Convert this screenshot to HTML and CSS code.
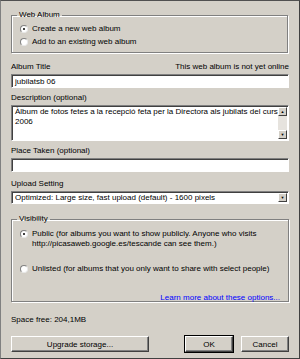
FILE: index.html
```html
<!DOCTYPE html>
<html>
<head>
  <title>Web Album</title>
  <link rel="stylesheet" href="styles.css">
</head>
<body>

  <div class="dialog">
    <fieldset class="group album-group">
      <legend>Web Album</legend>
      <label class="radio"><span class="dot checked"></span>Create a new web album</label>
      <label class="radio"><span class="dot"></span>Add to an existing web album</label>
    </fieldset>

    <div class="row-label title-label">
      <span>Album Title</span>
      <span>This web album is not yet online</span>
    </div>
    <div class="field">jubilatsb 06</div>

    <div class="row-label">Description (optional)</div>
    <div class="field area">
      <div class="area-text">Àlbum de fotos fetes a la recepció feta per la Directora als jubilats del curs 2006</div>
      <div class="scrollbar">
        <span class="arrow">&#9650;</span>
        <span class="track"></span>
        <span class="arrow">&#9660;</span>
      </div>
    </div>

    <div class="row-label">Place Taken (optional)</div>
    <div class="field"></div>

    <div class="row-label upload-label">Upload Setting</div>
    <div class="field select">
      <span>Optimized: Large size, fast upload (default) - 1600 pixels</span>
      <span class="drop">&#9660;</span>
    </div>

    <fieldset class="group vis-group">
      <legend>Visibility</legend>
      <label class="radio top"><span class="dot checked"></span><span>Public (for albums you want to show publicly. Anyone who visits<br>http://picasaweb.google.es/tescande can see them.)</span></label>
      <label class="radio unlisted"><span class="dot"></span>Unlisted (for albums that you only want to share with select people)</label>
      <a class="learn" href="#">Learn more about these options...</a>
    </fieldset>

    <div class="space">Space free: 204,1MB</div>

    <div class="buttons">
      <button class="btn wide">Upgrade storage...</button>
      <span class="spacer"></span>
      <button class="btn default">OK</button>
      <button class="btn">Cancel</button>
    </div>
  </div>

</body>
</html>
```

FILE: styles.css
```css
body {
  margin: 0;
  padding: 0;
  background-color: #d4d0c8;
  font-family: "Liberation Sans", Arial, sans-serif;
  font-size: 8px;
  color: #000;
}

.dialog {
  width: 300px;
  height: 359px;
  box-sizing: border-box;
  padding: 9px 10px 0 10px;
  border-top: 1px solid #505050;
  border-left: 1px solid #808080;
  border-right: 1px solid #404040;
  border-bottom: 1px solid #404040;
  display: flex;
  flex-direction: column;
}

.group {
  margin: 0;
  padding: 0 0 0 8px;
  border: 1px solid #808080;
  box-shadow: inset 1px 1px 0 #fff, 1px 1px 0 #fff;
  min-width: 0;
  box-sizing: border-box;
  flex: none;
}

.group legend {
  padding: 0 2px;
  margin-left: -3px;
  line-height: 10px;
}

.album-group {
  height: 43px;
  width: 277px;
  padding-top: 2px;
}

.radio {
  display: flex;
  align-items: center;
  gap: 4px;
  height: 13px;
}

.radio.top {
  align-items: flex-start;
  line-height: 10px;
  height: auto;
  margin-top: 5px;
}

.radio.top .dot {
  margin-top: 1px;
}

.radio.unlisted {
  margin-top: 13px;
}

.dot {
  width: 8px;
  height: 8px;
  border-radius: 50%;
  background: #fff;
  box-sizing: border-box;
  border: 1px solid #808080;
  border-right-color: #e8e8e8;
  border-bottom-color: #e8e8e8;
  position: relative;
  flex: none;
}

.dot.checked::after {
  content: "";
  position: absolute;
  left: 2px;
  top: 2px;
  width: 2px;
  height: 2px;
  background: #000;
  border-radius: 50%;
}

.row-label {
  line-height: 10px;
  margin-top: 5px;
  margin-bottom: 2px;
}

.title-label {
  display: flex;
  justify-content: space-between;
  margin-top: 9px;
}

.upload-label {
  margin-top: 7px;
}

.field {
  height: 14px;
  flex: none;
  box-sizing: border-box;
  background: #fff;
  border: 1px solid;
  border-color: #808080 #fff #fff #808080;
  box-shadow: inset 1px 1px 0 #404040;
  padding: 1px 3px;
  line-height: 11px;
}

.area {
  height: 36px;
  display: flex;
  padding: 1px 1px 1px 3px;
}

.area-text {
  flex: 1;
  line-height: 10px;
}

.scrollbar {
  width: 9px;
  display: flex;
  flex-direction: column;
  background: #e6e3de;
}

.arrow {
  height: 9px;
  background: #d4d0c8;
  box-sizing: border-box;
  border: 1px solid;
  border-color: #fff #404040 #404040 #fff;
  font-size: 4px;
  line-height: 7px;
  text-align: center;
  color: #000;
}

.track {
  flex: 1;
}

.select {
  height: 13px;
  display: flex;
  justify-content: space-between;
  padding: 0 1px 0 3px;
  line-height: 10px;
  align-items: center;
}

.drop {
  width: 9px;
  height: 9px;
  background: #d4d0c8;
  box-sizing: border-box;
  border: 1px solid;
  border-color: #fff #404040 #404040 #fff;
  font-size: 4px;
  line-height: 7px;
  text-align: center;
}

.vis-group {
  height: 88px;
  margin-top: 10px;
  padding-right: 8px;
  display: flex;
  flex-direction: column;
}

.learn {
  color: #0000ff;
  text-decoration: none;
  text-align: right;
  margin-top: 18px;
}

.space {
  margin-top: 13px;
  line-height: 10px;
}

.buttons {
  display: flex;
  gap: 8px;
  margin-top: 11px;
}

.spacer {
  flex: 1;
}

.btn {
  height: 16px;
  width: 48px;
  padding: 0;
  background: #d4d0c8;
  font-family: "Liberation Sans", Arial, sans-serif;
  font-size: 8px;
  color: #000;
  border: 1px solid;
  border-color: #fff #404040 #404040 #fff;
  box-shadow: inset -1px -1px 0 #808080;
}

.btn.wide {
  width: 138px;
}

.btn.default {
  outline: 1px solid #000;
  outline-offset: 0;
}
```
